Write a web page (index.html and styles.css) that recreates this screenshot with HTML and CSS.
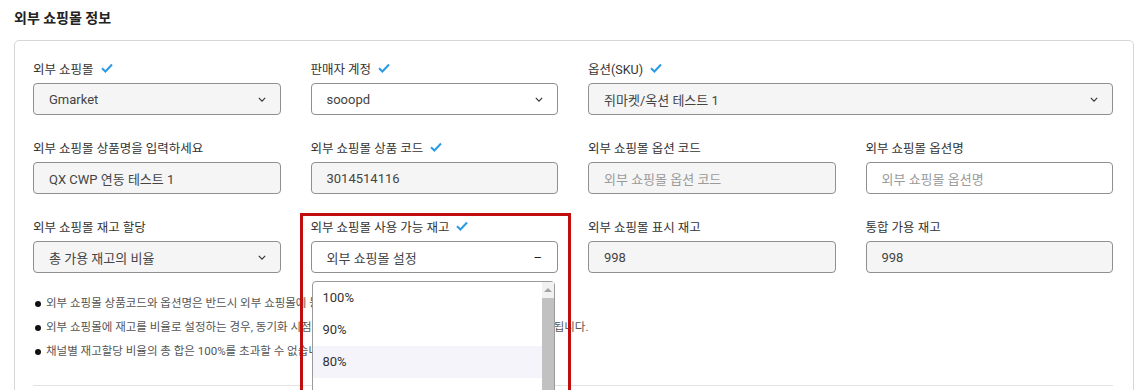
FILE: index.html
```html
<!DOCTYPE html>
<html lang="ko">
<head>
    <meta charset="UTF-8">
    <title>외부 쇼핑몰 정보</title>
    <link rel="stylesheet" href="styles.css">
</head>
<body>
    <div class="page">
        <h3 class="title">외부 쇼핑몰 정보</h3>
        <div class="panel">
            <div class="grid">
                <div class="field">
                    <div class="label">외부 쇼핑몰 <svg class="check" viewBox="0 0 12 10"><path d="M1 5.2 L4.4 8.5 L11 1.5"/></svg></div>
                    <div class="box disabled">Gmarket <svg class="chev" viewBox="0 0 10 6"><path d="M1 1 L5 5 L9 1"/></svg></div>
                </div>
                <div class="field">
                    <div class="label">판매자 계정 <svg class="check" viewBox="0 0 12 10"><path d="M1 5.2 L4.4 8.5 L11 1.5"/></svg></div>
                    <div class="box">sooopd <svg class="chev" viewBox="0 0 10 6"><path d="M1 1 L5 5 L9 1"/></svg></div>
                </div>
                <div class="field span2">
                    <div class="label">옵션(SKU) <svg class="check" viewBox="0 0 12 10"><path d="M1 5.2 L4.4 8.5 L11 1.5"/></svg></div>
                    <div class="box disabled">쥐마켓/옥션 테스트 1 <svg class="chev" viewBox="0 0 10 6"><path d="M1 1 L5 5 L9 1"/></svg></div>
                </div>

                <div class="field">
                    <div class="label">외부 쇼핑몰 상품명을 입력하세요</div>
                    <div class="box disabled">QX CWP 연동 테스트 1</div>
                </div>
                <div class="field">
                    <div class="label">외부 쇼핑몰 상품 코드 <svg class="check" viewBox="0 0 12 10"><path d="M1 5.2 L4.4 8.5 L11 1.5"/></svg></div>
                    <div class="box disabled">3014514116</div>
                </div>
                <div class="field">
                    <div class="label">외부 쇼핑몰 옵션 코드</div>
                    <div class="box disabled placeholder">외부 쇼핑몰 옵션 코드</div>
                </div>
                <div class="field">
                    <div class="label">외부 쇼핑몰 옵션명</div>
                    <div class="box placeholder">외부 쇼핑몰 옵션명</div>
                </div>

                <div class="field">
                    <div class="label">외부 쇼핑몰 재고 할당</div>
                    <div class="box disabled">총 가용 재고의 비율 <svg class="chev" viewBox="0 0 10 6"><path d="M1 1 L5 5 L9 1"/></svg></div>
                </div>
                <div class="field open">
                    <div class="label">외부 쇼핑몰 사용 가능 재고 <svg class="check" viewBox="0 0 12 10"><path d="M1 5.2 L4.4 8.5 L11 1.5"/></svg></div>
                    <div class="box">외부 쇼핑몰 설정 <span class="dash">–</span></div>
                    <div class="dropdown">
                        <div class="options">
                            <div class="option">100%</div>
                            <div class="option">90%</div>
                            <div class="option hover">80%</div>
                        </div>
                        <div class="scrollbar">
                            <span class="arrow"></span>
                            <span class="thumb"></span>
                        </div>
                    </div>
                    <div class="highlight"></div>
                </div>
                <div class="field">
                    <div class="label">외부 쇼핑몰 표시 재고</div>
                    <div class="box disabled">998</div>
                </div>
                <div class="field">
                    <div class="label">통합 가용 재고</div>
                    <div class="box disabled">998</div>
                </div>
            </div>

            <ul class="notes">
                <li>외부 쇼핑몰 상품코드와 옵션명은 반드시 외부 쇼핑몰에 등록된 정보와 동일해야 합니다.</li>
                <li>외부 쇼핑몰에 재고를 비율로 설정하는 경우, 동기화 시점의 통합 가용 재고량을 기준으로 계산되어 자동 반영됩니다.</li>
                <li>채널별 재고할당 비율의 총 합은 100%를 초과할 수 없습니다.</li>
            </ul>
            <div class="divider"></div>
        </div>
    </div>
</body>
</html>
```

FILE: styles.css
```css
body {
    margin: 0;
    font-family: Roboto, "Noto Sans CJK KR", sans-serif;
    color: #333;
    background: #fff;
    overflow: hidden;
}
.page {
    padding: 0 12px 0 14px;
}
.title {
    margin: 0;
    padding-top: 9px;
    height: 31px;
    font-size: 14px;
    font-weight: 700;
    line-height: 18px;
    color: #222;
}
.panel {
    border: 1px solid #d6d6d6;
    border-radius: 5px;
    padding: 18px 20px 40px 18px;
}
.grid {
    display: grid;
    grid-template-columns: repeat(4, 1fr);
    column-gap: 30px;
    row-gap: 23px;
}
.field {
    position: relative;
}
.span2 {
    grid-column: span 2;
}
.label {
    display: flex;
    align-items: center;
    gap: 7px;
    height: 18px;
    margin-bottom: 6px;
    font-size: 12.5px;
    color: #333;
}
.check {
    width: 12px;
    height: 10px;
    fill: none;
    stroke: #2a9be4;
    stroke-width: 2;
}
.box {
    display: flex;
    align-items: center;
    justify-content: space-between;
    height: 32px;
    box-sizing: border-box;
    padding: 0 14px 0 15px;
    border: 1px solid #8f8f8f;
    border-radius: 4px;
    font-size: 13px;
    color: #444;
    background: #fff;
}
.box.disabled {
    background: #f5f5f5;
}
.box.placeholder {
    color: #9a9a9a;
}
.chev {
    width: 8px;
    height: 5px;
    fill: none;
    stroke: #333;
    stroke-width: 1.4;
}
.dash {
    color: #222;
    font-size: 13px;
    margin-right: 1px;
}
.dropdown {
    position: absolute;
    top: 64px;
    left: 1px;
    width: 241px;
    height: 150px;
    display: flex;
    border: 1px solid #9a9a9a;
    border-radius: 4px 4px 0 0;
    background: #fff;
    z-index: 2;
}
.options {
    flex: 1;
}
.option {
    height: 32px;
    line-height: 32px;
    padding-left: 10px;
    font-size: 13px;
    color: #333;
}
.option.hover {
    background: #f6f4fb;
}
.scrollbar {
    width: 12px;
    background: #f1f1f1;
    display: flex;
    flex-direction: column;
    align-items: center;
}
.arrow {
    margin-top: 6px;
    border-left: 4px solid transparent;
    border-right: 4px solid transparent;
    border-bottom: 4px solid #a3a3a3;
}
.thumb {
    margin-top: 6px;
    width: 12px;
    height: 120px;
    background: #c1c1c1;
}
.highlight {
    position: absolute;
    top: -4px;
    left: -11px;
    right: -13px;
    height: 200px;
    border: 3px solid #c00d0d;
    z-index: 3;
    pointer-events: none;
}
.notes {
    list-style: none;
    margin: 18px 0 0 0;
    padding: 0;
}
.notes li {
    position: relative;
    padding-left: 13px;
    font-size: 11.5px;
    line-height: 24px;
    color: #555;
    white-space: nowrap;
}
.notes li::before {
    content: "";
    position: absolute;
    left: 2px;
    top: 10px;
    width: 6px;
    height: 6px;
    border-radius: 50%;
    background: #111;
}
.divider {
    margin-top: 22px;
    border-top: 1px solid #e2e2e2;
}
```
